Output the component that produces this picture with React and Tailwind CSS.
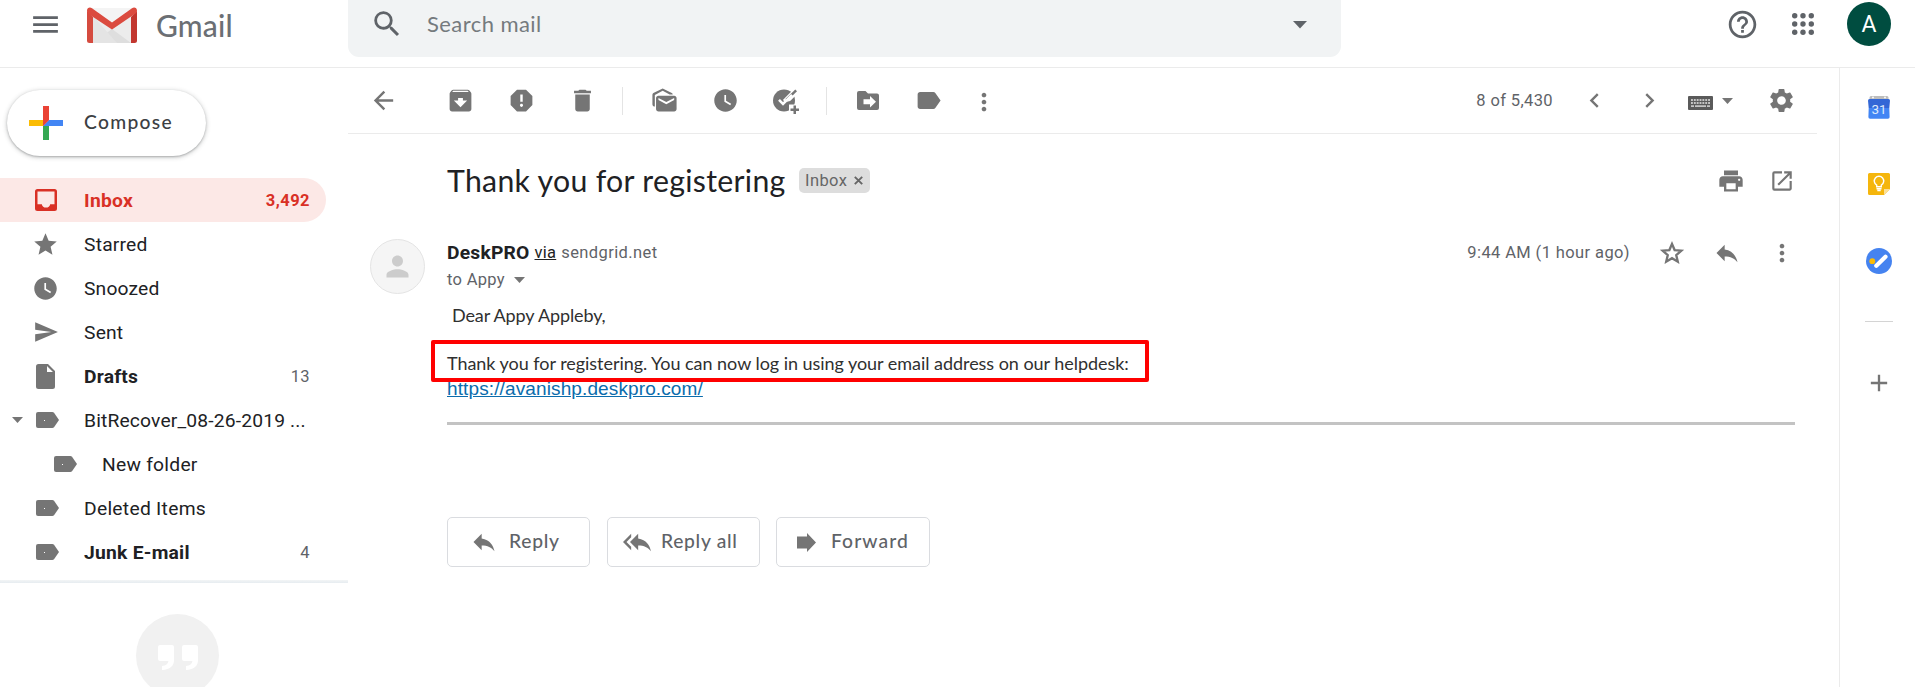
import {
  MdMenu, MdSearch, MdHelpOutline, MdArrowBack, MdArchive, MdReport, MdDelete,
  MdWatchLater, MdLabel, MdMoreVert, MdChevronLeft, MdChevronRight, MdSettings, MdPrint, MdOpenInNew,
  MdReply, MdReplyAll, MdStar, MdSend, MdAdd, MdPerson,
} from "react-icons/md";

const GmailLogo = () => (
  <svg width="50" height="37" viewBox="0 0 50 37" className="shrink-0">
    <path d="M3 1h44v35H3z" fill="#ececec" />
    <path d="M6 36 25 22 44 36z" fill="#dedede" />
    <path d="M6 9 30 36H6z" fill="#e4e4e4" />
    <path d="M4 1h42L25 17z" fill="#f4f4f4" />
    <path d="M0 4v29.500a2.500 2.500 0 0 0 2.500 2.500H6V10z" fill="#d54b3f" />
    <path d="M50 4v29.500a2.500 2.500 0 0 1-2.500 2.500H44V10z" fill="#c2372f" />
    <path d="M0 3.500C0 .6 3-.3 5 1.200L25 15.400 45 1.200c2-1.500 5-.6 5 2.300 0 1.400-.5 2.300-1.500 3L25 22.600 1.500 6.900C.5 6.200 0 4.900 0 3.500z" fill="#db4b3f" />
  </svg>
);

const ComposePlus = () => (
  <svg width="34" height="34" viewBox="0 0 34 34" className="shrink-0">
    <path d="M14 0h6v14l-6 6z" fill="#ea4335" />
    <path d="M0 14h14v6H0z" fill="#fbbc04" />
    <path d="M14 20h6v14h-6z" fill="#34a853" />
    <path d="M20 14h14v6H14z" fill="#4285f4" />
    <path d="M14 14h6l-6 6z" fill="#ea4335" />
  </svg>
);

const InboxIcon = () => (
  <svg width="22" height="22" viewBox="0 0 22 22">
    <path fillRule="evenodd" fill="#d93025" d="M2.500 0h17A2.500 2.500 0 0 1 22 2.500v17a2.500 2.500 0 0 1-2.500 2.500h-17A2.500 2.500 0 0 1 0 19.500v-17A2.500 2.500 0 0 1 2.500 0zM2.500 2.500v12.700h4.300a4.300 4.300 0 0 0 8.400 0h4.300V2.500z" />
  </svg>
);

const DraftIcon = () => (
  <svg width="19" height="25" viewBox="0 0 19 25">
    <path fillRule="evenodd" fill="#757575" d="M2.500 0H12l7 7v15.500a2.500 2.500 0 0 1-2.500 2.500h-14A2.500 2.500 0 0 1 0 22.500v-20A2.500 2.500 0 0 1 2.500 0zM11 2v6h6z" />
  </svg>
);

const FolderLabel = () => (
  <svg width="23" height="16" viewBox="0 0 23 16" className="translate-x-[2px]">
    <path fill="#757575" d="M2 0h14.300c.7 0 1.300.3 1.700.8L23 8l-5 7.200c-.4.500-1 .8-1.700.8H2a2 2 0 0 1-2-2V2a2 2 0 0 1 2-2z" />
    <path fill="#fff" d="M8 8h1v1H8z" />
  </svg>
);

const MarkUnread = () => (
  <svg width="29" height="29" viewBox="0 0 24 24" fill="currentColor">
    <path d="M18.830 7h-2.600L10.500 4 4 7.400V17c-1.100 0-2-.9-2-2V7.170c0-.53.32-1.090.8-1.340L10.500 2l7.540 3.830c.43.23.73.7.79 1.170zM20 8H7c-1.100 0-2 .9-2 2v9c0 1.100.9 2 2 2h13c1.100 0 2-.9 2-2v-9c0-1.100-.9-2-2-2zm0 3.670L13.500 15 7 11.670V10l6.500 3.330L20 10v1.670z" />
  </svg>
);

const AddTask = () => (
  <svg width="26" height="25" viewBox="0 0 26 25">
    <circle cx="11" cy="11.500" r="11" fill="#757575" />
    <path d="M12 13 25 0" fill="none" stroke="#fff" strokeWidth="6" />
    <path d="M2.500 8.500 1 13l5 8 5 1 5-6 1-4-4 1z" fill="#757575" />
    <path d="m13 9.500 9.300-9 1.700 1.700L12 14z" fill="#757575" />
    <path d="M6 10.800 10 14.800l9-9" fill="none" stroke="#fff" strokeWidth="2.600" />
    <path d="M16 15.500H26V25H16z" fill="#fff" />
    <path d="M20.500 16.500h2.500v3h3v2.500h-3v3h-2.500v-3h-3v-2.500h3z" fill="#757575" />
  </svg>
);

const MoveTo = () => (
  <svg width="22" height="19" viewBox="0 0 22 19">
    <path d="M2 0h6.500L11 2.500h9a2 2 0 0 1 2 2V17a2 2 0 0 1-2 2H2a2 2 0 0 1-2-2V2a2 2 0 0 1 2-2z" fill="#757575" />
    <path d="M6.500 8.300H13V5l6 5.800-6 5.800v-3.300H6.500z" fill="#fff" />
  </svg>
);

const StarOutline = () => (
  <svg width="28" height="28" viewBox="0 0 24 24">
    <path d="m12 4.200 2.240 5.290 5.760.5-4.360 3.800 1.300 5.610L12 16.430 7.060 19.400l1.300-5.610L4 9.990l5.760-.5z" fill="none" stroke="#757575" strokeWidth="2" />
  </svg>
);

const Keyboard = () => (
  <svg width="25" height="14" viewBox="0 0 25 14">
    <rect width="25" height="14" rx="1" fill="#5a5a5a" />
    <path d="M3 4h19M3 7h19" stroke="#c4c4c4" strokeWidth="1.800" strokeDasharray="1.900 .95" />
    <path d="M3 10.200h3M7 10.200h11M19 10.200h3" stroke="#c4c4c4" strokeWidth="1.800" />
  </svg>
);

const Apps = () => (
  <svg width="22" height="22" viewBox="0 0 22 22" fill="#5f6368">
    {[2.7, 11, 19.3].map((y) => [2.7, 11, 19.3].map((x) => <circle key={x + "-" + y} cx={x} cy={y} r="2.7" />))}
  </svg>
);

const Caret = ({ className }) => (
  <svg width="11" height="6" viewBox="0 0 11 6" className={className} fill="currentColor"><path d="M0 0h11L5.500 6z" /></svg>
);

const ForwardArrow = () => (
  <svg width="19" height="19" viewBox="0 0 19 19"><path d="M0 3.500h10V0l9 9.500-9 9.500v-3.500H0z" fill="#757575" /></svg>
);

const CalendarIcon = () => (
  <svg width="22" height="23" viewBox="0 0 22 23">
    <path d="M1.500 4V1.500A1.500 1.500 0 0 1 3 0h16a1.500 1.500 0 0 1 1.500 1.500V4z" fill="#bdbdbd" />
    <circle cx="5" cy="1.500" r=".9" fill="#fff" /><circle cx="17" cy="1.500" r=".9" fill="#fff" />
    <path d="M0 4.500A1.500 1.500 0 0 1 1.500 3h19A1.500 1.500 0 0 1 22 4.500L21.300 12H.7z" fill="#3367d6" />
    <path d="M.7 12h20.600l.3 9a1.700 1.700 0 0 1-1.700 1.800H2.100A1.700 1.700 0 0 1 .4 21z" fill="#4285f4" />
    <text x="11" y="17.800" textAnchor="middle" fontFamily="Roboto, sans-serif" fontSize="13.500" fill="#dfe9fb">31</text>
  </svg>
);

const KeepIcon = () => (
  <svg width="22" height="22" viewBox="0 0 22 22">
    <path d="M1.500 0h19A1.500 1.500 0 0 1 22 1.500V16l-6 6H1.500A1.500 1.500 0 0 1 0 20.500v-19A1.500 1.500 0 0 1 1.500 0z" fill="#f5b60d" />
    <path d="M16 22v-6h6z" fill="#fbe09a" />
    <path d="M8.700 13.700v-1.600A4.700 4.700 0 1 1 13.300 12.100v1.600z" fill="none" stroke="#fff" strokeWidth="1.400" />
    <path d="M8.500 15.700h5M9.300 17.500h3.400" stroke="#fff" strokeWidth="1.400" />
  </svg>
);

const TasksIcon = () => (
  <svg width="26" height="26" viewBox="0 0 26 26">
    <circle cx="13" cy="13" r="13" fill="#4583f0" />
    <circle cx="6.300" cy="13.200" r="2.900" fill="#fbbc04" />
    <path d="M10.300 17.700 19.500 8.700" stroke="#fff" strokeWidth="4.200" strokeLinecap="round" />
  </svg>
);

const nav = [
  { name: "Starred", icon: <MdStar size={27} />, ls: "tracking-[0.2px]" },
  { name: "Snoozed", icon: <MdWatchLater size={27} />, ls: "tracking-[0.17px]" },
  { name: "Sent", icon: <MdSend size={26} />, ls: "tracking-[0.2px]" },
  { name: "Drafts", icon: <DraftIcon />, bold: true, count: "13", ls: "tracking-[0.2px]" },
  { name: "BitRecover_08-26-2019 ...", icon: <FolderLabel />, caret: true, ls: "tracking-[0.16px]" },
  { name: "New folder", icon: <FolderLabel />, nested: true, ls: "tracking-[0.25px]" },
  { name: "Deleted Items", icon: <FolderLabel />, ls: "tracking-[0.28px]" },
  { name: "Junk E-mail", icon: <FolderLabel />, bold: true, count: "4", ls: "tracking-[0.26px]" },
];

function Header() {
  return (
    <header className="flex h-[68px] shrink-0 items-start border-b border-[#ebebeb] text-[#5f6368]">
      <div className="flex h-[49px] w-[348px] items-center">
        <MdMenu size={33} className="ml-[29px] shrink-0" />
        <div className="ml-[25px] mt-[1px] flex items-center"><GmailLogo /></div>
        <span className="ml-[19px] font-[Lato,sans-serif] text-[30px] font-medium leading-[40px] tracking-[0.2px] text-[#6b6f74]">Gmail</span>
      </div>
      <div className="flex h-[57px] w-[993px] items-center rounded-b-[11px] bg-[#f1f3f4] pb-[9px]">
        <MdSearch size={34} className="ml-[22px]" />
        <span className="ml-[23px] font-[Lato,sans-serif] text-[22px] leading-[32px] tracking-[0.43px] text-[#757a7e]">Search mail</span>
        <svg width="14" height="8" viewBox="0 0 14 8" className="ml-auto mr-[34px] mt-[2px]"><path d="M0 0h14L7 7.500z" fill="#5f6368" /></svg>
      </div>
      <div className="ml-auto flex h-[48px] items-center pr-[24px]">
        <MdHelpOutline size={33} className="mr-[33px]" />
        <Apps />
        <div className="ml-[33px] flex h-[44px] w-[44px] items-center justify-center rounded-full bg-[#004d40] pt-[2px] font-[Roboto,sans-serif] text-[23px] text-white">A</div>
      </div>
    </header>
  );
}

function Sidebar() {
  return (
    <aside className="flex w-[348px] shrink-0 flex-col overflow-hidden font-[Roboto,sans-serif]">
      <button className="ml-[7px] mt-[22px] flex h-[66px] w-[199px] shrink-0 items-center rounded-full bg-white pl-[22px] shadow-[0_1px_2px_0_rgba(60,64,67,0.302),0_1px_4px_1px_rgba(60,64,67,0.2)]">
        <ComposePlus />
        <span className="-mt-px ml-[21px] font-[Lato,sans-serif] text-[19.25px] font-medium tracking-[1.3px] text-[#3c4043]">Compose</span>
      </button>
      <nav className="mt-[22px] w-[326px] text-[19.25px] text-[#202124]">
        <div className="flex h-[44px] items-center rounded-r-full bg-[#fce8e6] pr-[16px] font-bold text-[#d93025]">
          <span className="flex w-[84px] pl-[35px]"><InboxIcon /></span>
          <span className="pt-[2px] tracking-[0.27px]">Inbox</span>
          <span className="ml-auto pt-[2px] text-[16.5px] tracking-[0.45px]">3,492</span>
        </div>
        {nav.map((n) => (
          <div key={n.name} className={n.nested ? "flex h-[44px] items-center pl-[18px] pr-[16px]" : "flex h-[44px] items-center pr-[16px]"}>
            <span className="flex w-[26px] shrink-0 justify-center text-[#757575]">{n.caret && <Caret className="ml-[9px]" />}</span>
            <span className="flex w-[39px] shrink-0 justify-center text-[#757575]">{n.icon}</span>
            <span className={`ml-[19px] whitespace-nowrap pt-[2px] ${n.ls} ${n.bold ? "font-bold" : ""}`}>{n.name}</span>
            {n.count && <span className="ml-auto pt-[2px] text-[16.5px] tracking-[0.4px] text-[#5f6368]">{n.count}</span>}
          </div>
        ))}
      </nav>
      <div className="mt-[6px] h-[3px] shrink-0 bg-gradient-to-b from-[#f3f5f6] to-[#e6ecf0]" />
      <div className="ml-[136px] mt-[31px] flex h-[83px] w-[83px] shrink-0 items-center justify-center rounded-full bg-[#f1f1f1] text-white">
        <svg width="40" height="26" viewBox="0 0 40 26" fill="currentColor" className="mt-[5px]">
          <path d="M2 0h12a2 2 0 0 1 2 2v13c0 6-4 9.500-12 10v-4c4-.5 6-2 6.500-5H2a2 2 0 0 1-2-2V2a2 2 0 0 1 2-2z" />
          <path d="M26 0h12a2 2 0 0 1 2 2v13c0 6-4 9.500-12 10v-4c4-.5 6-2 6.500-5H26a2 2 0 0 1-2-2V2a2 2 0 0 1 2-2z" />
        </svg>
      </div>
    </aside>
  );
}

const Slot = ({ children }) => <span className="flex w-[61px] shrink-0 justify-center">{children}</span>;

function Toolbar() {
  return (
    <div className="mr-[22px] flex h-[66px] shrink-0 items-center border-b border-[#ebebeb] text-[#757575]">
      <MdArrowBack size={29} className="ml-[21px] mr-[32px] shrink-0" />
      <Slot><MdArchive size={29} /></Slot>
      <Slot><MdReport size={29} /></Slot>
      <Slot><MdDelete size={29} /></Slot>
      <span className="ml-[9px] h-[28px] w-px bg-[#e4e4e4]" />
      <span className="ml-[11px] flex w-[61px] shrink-0 justify-center"><MarkUnread /></span>
      <span className="flex w-[60px] shrink-0 justify-center"><MdWatchLater size={27} /></span>
      <span className="flex w-[61px] shrink-0 justify-center pt-[2px]"><AddTask /></span>
      <span className="ml-[10px] h-[28px] w-px bg-[#e4e4e4]" />
      <span className="ml-[10px] flex w-[61px] shrink-0 justify-center"><MoveTo /></span>
      <span className="flex w-[61px] shrink-0 justify-center"><MdLabel size={29} /></span>
      <span className="flex w-[49px] shrink-0 justify-center pt-[2px]"><MdMoreVert size={28} /></span>
      <span className="ml-auto mr-[14px] mt-[2px] whitespace-nowrap text-[16.5px] tracking-[0.37px] text-[#5f6368]">8 of 5,430</span>
      <span className="flex w-[55px] justify-center"><MdChevronLeft size={29} /></span>
      <span className="flex w-[55px] justify-center"><MdChevronRight size={29} /></span>
      <span className="ml-[11px] pt-[4px]"><Keyboard /></span>
      <Caret className="ml-[9px]" />
      <span className="ml-[34px] mr-[21px]"><MdSettings size={29} /></span>
    </div>
  );
}

function Message() {
  return (
    <section className="flex flex-col pl-[99px] text-[#202124]">
      <div className="flex h-[91px] items-center pr-[30px] text-[#757575]">
        <h1 className="w-[352px] whitespace-nowrap font-[Lato,sans-serif] text-[30.25px] leading-[40px] tracking-[0.3px] text-[#202124]">Thank you for registering</h1>
        <span className="mt-[2px] flex h-[25px] w-[71px] items-center whitespace-nowrap rounded-[5px] bg-[#dddddd] pl-[6px] text-[16.5px] tracking-[0.4px] text-[#666666]">
          <span className="pt-px">Inbox</span>
          <svg width="9" height="9" viewBox="0 0 9 9" className="ml-[7px]"><path d="M.8.8 8.200 8.200M8.200.8.8 8.200" stroke="#666" strokeWidth="1.900" /></svg>
        </span>
        <span className="ml-auto mr-[-2px] flex w-[50px] justify-center pt-[2px]"><MdPrint size={28} /></span>
        <span className="flex w-[55px] justify-center pt-[2px]"><MdOpenInNew size={26} /></span>
      </div>
      <div className="flex pt-[14px]">
        <div className="-ml-[77px] mr-[22px] flex h-[55px] w-[55px] shrink-0 items-center justify-center rounded-full border border-[#e4e4e4] bg-[#f5f5f5] text-[#cccccc]">
          <MdPerson size={33} />
        </div>
        <div className="pt-[2px]">
          <div className="flex h-[25px] items-center whitespace-nowrap text-[16.5px] text-[#5f6368]">
            <span className="text-[19.25px] font-bold tracking-[0.2px] text-[#202124]">DeskPRO</span>
            <span className="ml-[5px] tracking-[0.25px] text-[#222222] underline">via</span>
            <span className="ml-[5px] tracking-[0.4px]">sendgrid.net</span>
          </div>
          <div className="flex h-[28px] items-center whitespace-nowrap text-[16.5px] tracking-[0.3px] text-[#5f6368]">
            to Appy <Caret className="ml-[9px] text-[#757575]" />
          </div>
        </div>
        <div className="ml-auto flex h-[27px] items-center pr-[30px] text-[#757575]">
          <span className="mr-[14px] mt-[2px] whitespace-nowrap text-[16.5px] tracking-[0.39px] text-[#5f6368]">9:44 AM (1 hour ago)</span>
          <span className="flex w-[55px] justify-center"><StarOutline /></span>
          <span className="flex w-[55px] justify-center"><MdReply size={28} /></span>
          <span className="flex w-[55px] justify-center"><MdMoreVert size={28} /></span>
        </div>
      </div>
      <div className="w-[1348px] font-[Lato,sans-serif] text-[18px] text-[#303030]">
        <p className="h-[42px] pl-[5px] leading-[42px] tracking-[-0.12px]">Dear Appy Appleby,</p>
        <div className="relative mt-[11px] w-fit whitespace-nowrap">
          <p className="h-[33px] leading-[33px] tracking-[-0.040px]">Thank you for registering. You can now log in using your email address on our helpdesk:</p>
          <div className="absolute -left-[16px] -top-[7px] z-10 h-[42px] w-[718px] rounded-[2px] border-4 border-[#ff0000]" />
        </div>
        <a className="block h-[17px] w-fit font-['Liberation_Sans',sans-serif] text-[19px] leading-[17px] tracking-[0.12px] text-[#0b6cac] underline">https://avanishp.deskpro.com/</a>
        <div className="mt-[25px] h-[3px] bg-[#c3c3c3]" />
      </div>
      <div className="mt-[92px] flex font-[Lato,sans-serif] text-[19.25px] font-medium text-[#5f6368]">
        <button className="flex h-[50px] w-[143px] items-center rounded-[5px] border border-[#dadce0] pl-[22px]">
          <MdReply size={28} className="text-[#757575]" /><span className="-mt-[2px] ml-[11px] tracking-[0.72px]">Reply</span>
        </button>
        <button className="ml-[17px] flex h-[50px] w-[153px] items-center whitespace-nowrap rounded-[5px] border border-[#dadce0] pl-[15px]">
          <MdReplyAll size={28} className="text-[#757575]" /><span className="-mt-[2px] ml-[10px] tracking-[0.7px]">Reply all</span>
        </button>
        <button className="ml-[16px] flex h-[50px] w-[154px] items-center rounded-[5px] border border-[#dadce0] pl-[20px]">
          <ForwardArrow /><span className="-mt-[2px] ml-[15px] tracking-[1.080px]">Forward</span>
        </button>
      </div>
    </section>
  );
}

export default function App() {
  return (
    <div className="flex h-screen flex-col overflow-hidden bg-white font-[Roboto,sans-serif]">
      <Header />
      <div className="flex min-h-0 flex-1">
        <Sidebar />
        <main className="flex min-w-0 flex-1 flex-col">
          <Toolbar />
          <Message />
        </main>
        <aside className="flex w-[76px] shrink-0 flex-col items-center border-l border-[#ebebeb] pl-[3px]">
          <div className="mt-[28px]"><CalendarIcon /></div>
          <div className="mt-[54px]"><KeepIcon /></div>
          <div className="mt-[53px]"><TasksIcon /></div>
          <div className="mt-[47px] h-px w-[28px] bg-[#d4d4d4]" />
          <MdAdd size={28} className="mt-[47px] text-[#757575]" />
        </aside>
      </div>
    </div>
  );
}
